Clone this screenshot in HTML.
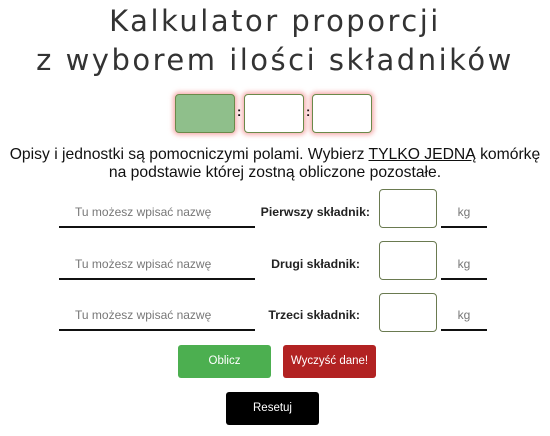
<!DOCTYPE html>
<html><head><meta charset="utf-8"><style>
body{margin:0;width:550px;height:436px;background:#fff;font-family:"Liberation Sans",sans-serif;position:relative;overflow:hidden}
.a{position:absolute}
.t{left:0;width:550px;text-align:center;font-size:29px;letter-spacing:2.5px;color:#333;font-family:"DejaVu Sans","Liberation Sans",sans-serif;font-weight:normal}
.b{position:absolute;top:94px;width:58px;height:37px;border:1px solid #6a8a4a;border-radius:4px;box-shadow:0 0 5px 2px rgba(240,120,120,.6);background:#fff}
.d{position:absolute;font-size:13px;top:104px;font-weight:bold}
.p{font-size:15.7px;color:#111;left:0;width:550px;text-align:center;line-height:18px}
.n{left:59px;width:196px;border-bottom:2px solid #111;font-size:12px;color:#777;padding-left:16px;padding-top:3px;box-sizing:border-box;height:26px}
.l{width:200px;left:170px;text-align:right;font-size:12.3px;font-weight:bold;color:#222}
.i{left:379px;width:58px;height:39px;border:1px solid #6a7a50;border-radius:4px;box-sizing:border-box}
.k{left:441px;width:46px;border-bottom:2px solid #111;font-size:12px;color:#777;text-align:center;height:26px;padding-top:3px;box-sizing:border-box}
.btn{width:93px;height:33px;border-radius:3px;color:#fff;font-size:11.5px;text-align:center;line-height:33px}
</style></head><body>
<div class="a t" style="top:4px">Kalkulator proporcji</div>
<div class="a t" style="top:43px">z wyborem ilości składników</div>
<div class="b" style="left:175px;background:#8fbf8b"></div>
<div class="d" style="left:237px">:</div>
<div class="b" style="left:244px"></div>
<div class="d" style="left:306px">:</div>
<div class="b" style="left:312px"></div>
<div class="a p" style="top:146px">Opisy i jednostki są pomocniczymi polami. Wybierz <u>TYLKO JEDNĄ</u> komórkę<br>na podstawie której zostną obliczone pozostałe.</div>

<div class="a n" style="top:202px">Tu możesz wpisać nazwę</div>
<div class="a l" style="top:205px">Pierwszy składnik:</div>
<div class="a i" style="top:189px"></div>
<div class="a k" style="top:202px">kg</div>

<div class="a n" style="top:254px">Tu możesz wpisać nazwę</div>
<div class="a l" style="top:257px;width:190px">Drugi składnik:</div>
<div class="a i" style="top:241px"></div>
<div class="a k" style="top:254px">kg</div>

<div class="a n" style="top:305px">Tu możesz wpisać nazwę</div>
<div class="a l" style="top:308px;width:190px">Trzeci składnik:</div>
<div class="a i" style="top:293px"></div>
<div class="a k" style="top:305px">kg</div>

<div class="a btn" style="left:178px;top:345px;background:#4caf50">Oblicz</div>
<div class="a btn" style="left:283px;top:345px;background:#b22222">Wyczyść dane!</div>
<div class="a btn" style="left:226px;top:392px;background:#000">Resetuj</div>
</body></html>
